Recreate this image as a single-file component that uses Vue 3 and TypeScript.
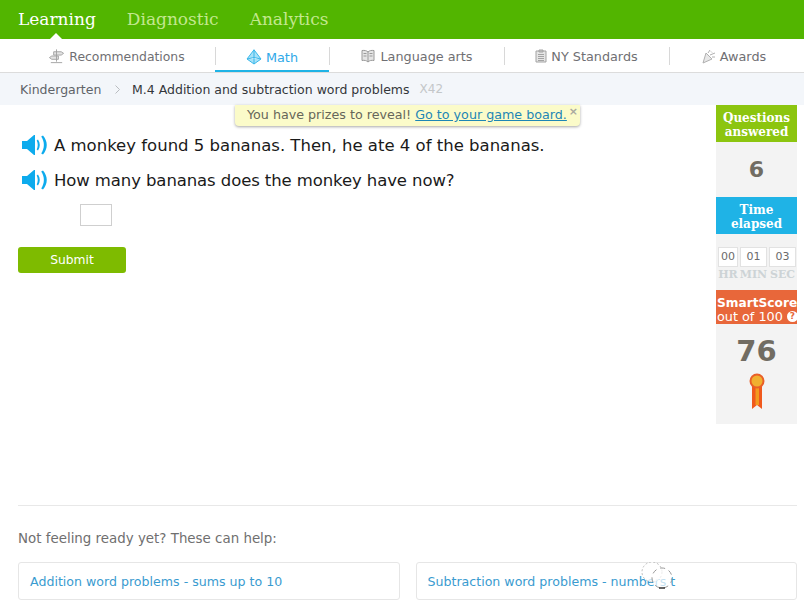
<script setup lang="ts">
const tabs = ['Learning', 'Diagnostic', 'Analytics']
</script>

<template>
  <div class="page">
    <header class="top">
      <a v-for="(t, i) in tabs" :key="t" class="top-link" :class="{ on: i === 0 }">{{ t }}</a>
    </header>
    <nav class="sub">
      <a class="sub-item w1">
        <svg width="17" height="16" viewBox="0 0 18 16" fill="none" stroke="#a3a3a3" stroke-width="1"><path d="M9 1v13M3 15h12M6 3.500h8l2.500 1.700L14 7H6zM11 8H4L1.500 9.700 4 11.500h7z" fill="#e3e3e3"/></svg>
        <span class="rec">Recommendations</span>
      </a>
      <a class="sub-item w2 active">
        <svg width="16" height="16" viewBox="0 0 16 16" fill="#a8e2f8" stroke="#39b7ea" stroke-width="1"><path d="M8 .8 1 10l7 5 7-5zM8 .8V15M1 10l7-1.500L15 10"/></svg>
        <span>Math</span>
      </a>
      <a class="sub-item w3">
        <svg width="16" height="14" viewBox="0 0 15 14" fill="#e5e5e5" stroke="#9a9a9a" stroke-width="1"><path d="M7.500 3C6 1.500 4 1.200 1.500 1.500v10C4 11 6 11.500 7.500 13c1.500-1.500 3.500-2 6-1.500v-10C11 1.200 9 1.500 7.500 3zM7.500 3v10M3 4.500h3M3 7h3M9 4.500h3M9 7h3"/></svg>
        <span>Language arts</span>
      </a>
      <a class="sub-item w4">
        <svg width="12" height="14" viewBox="0 0 12 14" fill="#e5e5e5" stroke="#a3a3a3" stroke-width="1"><path d="M1 2h10v11H1zM4 1h4v2H4zM3 5.500h6M3 7.500h6M3 9.500h6M3 11.500h6"/></svg>
        <span>NY Standards</span>
      </a>
      <a class="sub-item w5">
        <svg width="14" height="15" viewBox="0 0 14 15" fill="#e8e8e8" stroke="#b0b0b0" stroke-width="1"><path d="M1 14 4 4l6 6zM6 4l2-3M8 6l5-2M10 8h3M9 2.500l1 1"/></svg>
        <span>Awards</span>
      </a>
    </nav>
    <div class="crumbs">
      <span class="crumb-a">Kindergarten</span>
      <svg class="chev" width="7" height="9" viewBox="0 0 7 9" fill="none" stroke="#b9bcc0"><path d="M1.500 .5l4 4-4 4"/></svg>
      <span class="crumb-b">M.4 Addition and subtraction word problems</span>
      <span class="crumb-c">X42</span>
    </div>

    <div class="body">
      <div class="toast">
        You have prizes to reveal! <a class="toast-link">Go to your game board.</a>
        <span class="toast-x">×</span>
      </div>

      <main class="main">
        <div class="q first">
          <svg class="spk" width="26" height="20" viewBox="0 0 26 20" fill="#0dabed"><path d="M0 6h5l7-6h1v20h-1l-7-6H0z"/><path d="M16 4.500c2.400 3.500 2.400 7.500 0 11l-1.300-1c1.400-3 1.400-6 0-9z"/><path d="M21 .5c5 6 5 13 0 19l-1.800-1c3.600-5.500 3.600-11.500 0-17z"/></svg>
          <span>A monkey found 5 bananas. Then, he ate 4 of the bananas.</span>
        </div>
        <div class="q second">
          <svg class="spk" width="26" height="20" viewBox="0 0 26 20" fill="#0dabed"><path d="M0 6h5l7-6h1v20h-1l-7-6H0z"/><path d="M16 4.500c2.400 3.500 2.400 7.500 0 11l-1.300-1c1.400-3 1.400-6 0-9z"/><path d="M21 .5c5 6 5 13 0 19l-1.800-1c3.600-5.500 3.600-11.500 0-17z"/></svg>
          <span>How many bananas does the monkey have now?</span>
        </div>
        <div class="answer"></div>
        <button class="submit">Submit</button>

        <section class="help">
          <p class="help-title">Not feeling ready yet? These can help:</p>
          <div class="cards">
            <a class="card">Addition word problems - sums up to 10</a>
            <a class="card">Subtraction word problems - numbers t</a>
          </div>
          <svg class="spinner" width="50" height="30" viewBox="0 0 50 30" fill="none">
            <circle cx="12" cy="10" r="10" fill="#fff" fill-opacity=".75" stroke="#bbb" stroke-dasharray="2 2"/>
            <circle cx="22" cy="16" r="10" fill="#fff" fill-opacity=".7" stroke="#999" stroke-dasharray="5 4"/>
            <path d="M19 26h6" stroke="#333" stroke-width="1.500"/>
          </svg>
        </section>
      </main>

      <aside class="side">
        <div class="head green">Questions<br />answered</div>
        <div class="num q-num">6</div>
        <div class="head blue">Time<br />elapsed</div>
        <div class="timer">
          <div class="cell c1"><b>00</b><i>HR</i></div>
          <div class="cell c2"><b>01</b><i>MIN</i></div>
          <div class="cell c3"><b>03</b><i>SEC</i></div>
        </div>
        <div class="score-head">
          <strong>SmartScore</strong>
          <span class="out">out of 100<em>?</em></span>
        </div>
        <div class="score">
          <div class="score-num">76</div>
          <svg width="16" height="37" viewBox="0 0 16 37">
            <path d="M3 13h10v23l-5-4-5 4z" fill="#f0591d"/>
            <path d="M6.500 13h3.500v19H6.500z" fill="#f39a1f"/>
            <circle cx="8" cy="8" r="7.500" fill="#e95f28"/>
            <circle cx="8" cy="8" r="5.500" fill="#f0b030"/>
          </svg>
        </div>
      </aside>
    </div>
  </div>
</template>

<style>
html, body { margin: 0; background: #fff; overflow: hidden; }
</style>

<style scoped>
.page {
  width: 804px;
  height: 609px;
  display: flex;
  flex-direction: column;
  overflow: hidden;
  font-family: "DejaVu Sans", Verdana, sans-serif;
  color: #333;
}
.top {
  height: 39px;
  flex: none;
  box-sizing: border-box;
  background: #52b500;
  display: flex;
  gap: 31px;
  padding-left: 18px;
  align-items: center;
  position: relative;
}
.top-link {
  font-family: "DejaVu Serif", serif;
  font-size: 17px;
  color: #c3e88f;
  position: relative;
  line-height: 39px;
}
.top-link.on { color: #fff; }
.top-link.on::after {
  content: "";
  position: absolute;
  left: 32px;
  bottom: 0;
  border: 6px solid transparent;
  border-top: 0;
  border-bottom-color: #fff;
}
.sub {
  height: 34px;
  flex: none;
  box-sizing: border-box;
  border-bottom: 1px solid #dcdcdc;
  padding-left: 18px;
  display: flex;
}
.sub-item {
  box-sizing: border-box;
  height: 33px;
  display: flex;
  align-items: center;
  justify-content: center;
  gap: 4px;
  font-size: 12.800px;
  color: #6f6f73;
  position: relative;
  padding-top: 1px;
}
.rec { font-size: 12.400px; }
.sub-item + .sub-item::before {
  content: "";
  position: absolute;
  left: 0;
  top: 8px;
  height: 18px;
  width: 1px;
  background: #d8d8d8;
}
.w1 { width: 197px; }
.w2 { width: 114px; }
.w3 { width: 175px; }
.w4 { width: 165px; }
.w5 { width: 130px; }
.active { color: #2fa9e8; padding-top: 3px; box-shadow: inset 0 -2px 0 #1fb3e6; }
.crumbs {
  height: 32px;
  flex: none;
  background: #f3f6fa;
  display: flex;
  align-items: center;
  padding-left: 20px;
  font-size: 12.500px;
}
.crumb-a { color: #5f6368; width: 82px; white-space: nowrap; }
.chev { margin: 0 11px 0 12px; }
.crumb-b { color: #33363a; }
.crumb-c { color: #c4c7c9; margin-left: 10px; font-size: 12px; }
.body {
  flex: 1;
  display: flex;
  position: relative;
  min-height: 0;
}
.toast {
  position: absolute;
  top: 0;
  left: 235px;
  width: 345px;
  height: 21px;
  box-sizing: border-box;
  padding: 1px 0 0 12px;
  background: #fbfbc9;
  border-radius: 0 0 4px 4px;
  box-shadow: 0 1px 3px rgba(0, 0, 0, .35);
  font-size: 12.700px;
  line-height: 18px;
  color: #66665a;
  white-space: nowrap;
}
.toast-link { color: #1d86b5; text-decoration: underline; }
.toast-x {
  position: absolute;
  right: 2px;
  top: -2px;
  font-size: 11px;
  font-weight: bold;
  color: #a8a8a0;
}
.main {
  flex: 1;
  min-width: 0;
  padding: 0 0 9px 18px;
  display: flex;
  flex-direction: column;
  position: relative;
}
.q {
  display: flex;
  align-items: center;
  gap: 6px;
  height: 20px;
  margin: 15px 0 0 4px;
  font-size: 16.500px;
  color: #1a1a1a;
  white-space: nowrap;
}
.q.first { margin-top: 30px; }
.q.second span { letter-spacing: -0.1px; }
.answer {
  width: 30px;
  height: 20px;
  border: 1px solid #cfcfcf;
  margin: 14px 0 0 62px;
}
.submit {
  width: 108px;
  height: 26px;
  margin-top: 21px;
  border: 0;
  border-radius: 3px;
  background: #7ebb00;
  color: #fff;
  font: 12.300px "DejaVu Sans", sans-serif;
  padding: 0;
}
.help {
  margin-top: auto;
  margin-right: -81px;
  width: 779px;
  border-top: 1px solid #e8e8e8;
  position: relative;
}
.help-title {
  margin: 24px 0 0;
  font-size: 13.400px;
  line-height: 17px;
  color: #6f6f6f;
}
.cards {
  display: flex;
  gap: 16px;
  margin-top: 15px;
}
.card {
  flex: 1;
  height: 38px;
  box-sizing: border-box;
  border: 1px solid #e6e6e6;
  border-radius: 3px;
  padding: 1px 11px 0;
  font-size: 12.600px;
  line-height: 36px;
  color: #3a9bd0;
  white-space: nowrap;
}
.spinner {
  position: absolute;
  left: 622px;
  top: 56px;
}
.side {
  flex: none;
  position: relative;
  width: 81px;
  height: 319px;
  margin-right: 7px;
  margin-left: -81px;
  background: #f3f3f3;
  text-align: center;
  align-self: flex-start;
}
.head {
  height: 37px;
  box-sizing: border-box;
  padding-top: 6px;
  color: #fff;
  font-family: "DejaVu Serif", serif;
  font-weight: bold;
  font-size: 12px;
  line-height: 14px;
}
.green { background: #8cc50f; }
.blue { background: #1fb3e6; }
.num {
  height: 55px;
  font-weight: bold;
  font-size: 22px;
  line-height: 55px;
  color: #716c62;
}
.timer {
  height: 56px;
  display: flex;
  padding: 13px 0 0 2px;
  box-sizing: border-box;
  gap: 2px;
}
.cell { flex: none; }
.c1 { width: 20px; }
.c2 { width: 27px; }
.c3 { width: 27px; }
.cell b {
  display: block;
  height: 20px;
  box-sizing: border-box;
  background: #fff;
  border: 1px solid #e2e2e2;
  font-weight: normal;
  font-size: 11px;
  line-height: 18px;
  color: #6b6b6b;
}
.cell i {
  display: block;
  font-family: "DejaVu Serif", serif;
  font-style: normal;
  font-weight: bold;
  font-size: 11px;
  line-height: 16px;
  color: #cdd3d6;
  margin: 0 -3px;
}
.score-head {
  height: 34px;
  background: #e8673a;
  color: #fff;
  display: flex;
  flex-direction: column;
  padding-top: 6px;
  box-sizing: border-box;
  line-height: 14px;
  text-align: left;
}
.score-head strong {
  font-size: 12.200px;
  font-family: "DejaVu Sans", sans-serif;
  padding-left: 1px;
  white-space: nowrap;
}
.out { font-size: 12.800px; white-space: nowrap; padding-left: 1px; }
.out em {
  display: inline-block;
  width: 11px;
  height: 11px;
  margin-left: 4px;
  border-radius: 50%;
  background: #fff;
  color: #e8673a;
  font-style: normal;
  font-size: 9px;
  font-weight: bold;
  line-height: 11px;
  text-align: center;
  vertical-align: 2px;
}
.score { height: 100px; }
.score svg { display: block; margin: 7px auto 0; }
.score-num {
  font-weight: bold;
  font-size: 29px;
  line-height: 30px;
  padding-top: 12px;
  color: #716c62;
}
</style>
